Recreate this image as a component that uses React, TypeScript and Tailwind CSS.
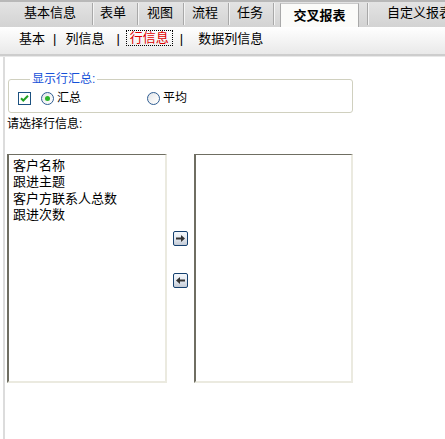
import React from "react";

const FONT = "font-['Liberation_Sans','Noto_Sans_CJK_SC',sans-serif]";

function TabSep({ className = "" }: { className?: string }) {
  return <div className={`mt-[1px] h-[22px] w-[2px] shrink-0 border-l border-r border-l-[#a8a8a8] border-r-[#f4f4f4] ${className}`} />;
}

function Arrow({ dir }: { dir: "right" | "left" }) {
  return (
    <button className="flex h-[15px] w-[15px] items-center justify-center rounded-[2px] border border-[#15406f] bg-gradient-to-b from-[#f4f7fb] via-[#e4e9f0] to-[#c3cad5] p-0">
      <svg width="13" height="13" viewBox="0 0 13 13">
        {dir === "right" ? (
          <path d="M2 5.5h5V3l4 3.5-4 3.5V7.5H2z" fill="#333" />
        ) : (
          <path d="M11 5.5H6V3L2 6.5 6 10V7.5h5z" fill="#333" />
        )}
      </svg>
    </button>
  );
}

function Radio({ checked }: { checked?: boolean }) {
  return (
    <span className="flex h-[13px] w-[13px] shrink-0 items-center justify-center rounded-full border border-[#2f5d92] bg-gradient-to-br from-[#dfe3e8] via-[#f4f4f4] to-white">
      {checked && <span className="h-[5px] w-[5px] rounded-full bg-[#2bb52b]" />}
    </span>
  );
}

const rows = ["客户名称", "跟进主题", "客户方联系人总数", "跟进次数"];

export default function App() {
  return (
    <div className={`h-[439px] w-[445px] overflow-hidden bg-white text-[13px] text-black ${FONT}`}>
      {/* main tabs */}
      <div className="flex h-[27px] items-start whitespace-nowrap border-t-2 border-[#b8b8b8] bg-gradient-to-b from-[#e3e3e3] to-[#d3d3d3]">
        <span className="ml-[24px] pt-[3px] leading-[16px]">基本信息</span>
        <TabSep className="ml-[16px]" />
        <span className="ml-[6px] pt-[3px] leading-[16px]">表单</span>
        <TabSep className="ml-[11px]" />
        <span className="ml-[8px] pt-[3px] leading-[16px]">视图</span>
        <TabSep className="ml-[10px]" />
        <span className="ml-[7px] pt-[3px] leading-[16px]">流程</span>
        <TabSep className="ml-[10px]" />
        <span className="ml-[7px] pt-[3px] leading-[16px]">任务</span>
        <TabSep className="ml-[10px]" />
        <div className="ml-[5px] mt-[1px] h-[24px] w-[79px] shrink-0 border-l border-r border-t border-l-[#a9a9a9] border-r-[#a9a9a9] border-t-[#c9c9c9] bg-[#fbfbf9] pt-[4px] text-center font-bold leading-[16px]">
          交叉报表
        </div>
        <TabSep className="ml-[8px]" />
        <span className="ml-[18px] pt-[3px] leading-[16px]">自定义报表</span>
      </div>

      {/* sub tabs */}
      <div className="flex h-[27px] items-start whitespace-nowrap bg-gradient-to-b from-white to-[#e9e9e9] pt-[4px] leading-[16px]">
        <span className="ml-[19px]">基本</span>
        <span className="ml-[8px]">|</span>
        <span className="ml-[9px]">列信息</span>
        <span className="ml-[12px]">|</span>
        <span className="ml-[6px] -mt-[1px] border border-dotted border-black px-[3px] leading-[14px] text-[#e00000]">行信息</span>
        <span className="ml-[7px]">|</span>
        <span className="ml-[15px]">数据列信息</span>
      </div>
      <div className="h-[2px] bg-[#cdcdcd]" />
      <div className="h-[1px] bg-[#e8e8e8]" />

      {/* body */}
      <div className="ml-[3px] h-[400px] border-l-2 border-[#dcdcdc] pt-[15px]">
        <fieldset className="ml-[3px] w-[345px] rounded-[3px] border border-[#d0d0bf] pb-[7px] pl-[9px] text-[12px]">
          <legend className="ml-[12px] px-[2px] leading-[14px] text-[#1450d8]">显示行汇总:</legend>
          <div className="mt-[5px] flex items-center leading-[14px]">
            <span className="flex h-[13px] w-[13px] shrink-0 items-center justify-center border border-[#1c5180] bg-white">
              <svg width="9" height="9" viewBox="0 0 9 9">
                <path d="M1 4.2l2.3 2.3L8 1.8" fill="none" stroke="#21a121" strokeWidth="2" />
              </svg>
            </span>
            <div className="ml-[10px] flex w-[106px] items-center">
              <Radio checked />
              <span className="ml-[3px]">汇总</span>
            </div>
            <Radio />
            <span className="ml-[3px]">平均</span>
          </div>
        </fieldset>

        <div className="mt-[3px] pl-[2px] text-[12px] leading-[16px]">请选择行信息:</div>

        <div className="ml-[2px] mt-[22px] flex items-start">
          <div className="h-[229px] w-[160px] border-b-2 border-l-2 border-r-2 border-t border-b-[#ebeae0] border-l-[#6f6e62] border-r-[#ebeae0] border-t-[#6f6e62] pl-[4px] pt-[3px] leading-[16.4px]">
            {rows.map((r) => (
              <div key={r}>{r}</div>
            ))}
          </div>
          <div className="ml-[6px] flex flex-col gap-[27px] pt-[77px]">
            <Arrow dir="right" />
            <Arrow dir="left" />
          </div>
          <div className="ml-[6px] h-[229px] w-[159px] border-b-2 border-l-2 border-r-2 border-t border-b-[#ebeae0] border-l-[#6f6e62] border-r-[#ebeae0] border-t-[#6f6e62]" />
        </div>
      </div>
    </div>
  );
}
